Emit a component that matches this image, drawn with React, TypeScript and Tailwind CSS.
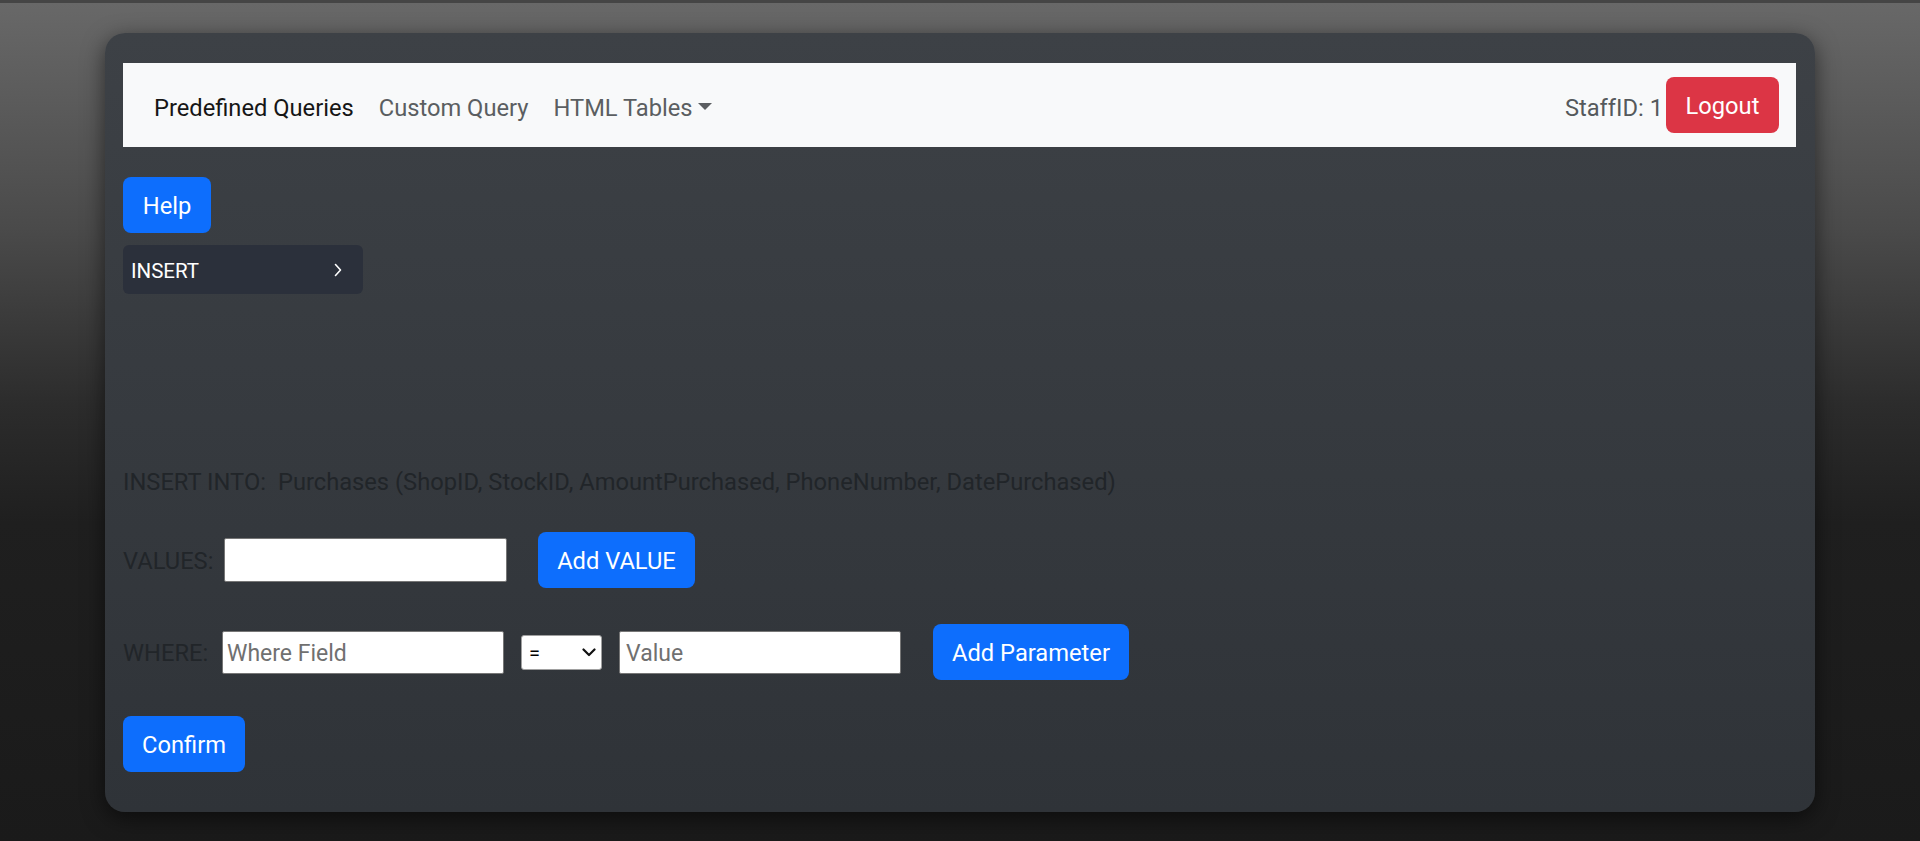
import React from "react";

function Chevron() {
  return (
    <svg width="8" height="14" viewBox="0 0 8 14" fill="none">
      <polyline points="1.5,1.5 6.5,7 1.5,12.5" stroke="#ffffff" strokeWidth="1.6" strokeLinecap="round" strokeLinejoin="round" />
    </svg>
  );
}

function SelectArrow() {
  return (
    <svg width="14" height="9" viewBox="0 0 14 9" fill="none">
      <polyline points="1.5,1.5 7,7 12.5,1.5" stroke="#111111" strokeWidth="2.2" strokeLinecap="round" strokeLinejoin="round" />
    </svg>
  );
}

export default function App() {
  return (
    <div className="min-h-screen w-full border-t-[3px] border-[#454545] bg-[linear-gradient(180deg,#686868_0%,#4a4a4a_27%,#2c2c2c_48%,#1f1f1f_62%,#1a1a1a_100%)] pt-[30px] pb-[29px] font-['Roboto','Liberation_Sans',sans-serif]">
      <div className="mx-auto w-[1710px] rounded-[20px] bg-linear-to-b from-[#3d4146] to-[#2f3338] pl-[18px] pr-[19px] pt-[30px] pb-[40px] shadow-[0_6px_22px_rgba(0,0,0,0.55)]">
        <nav className="flex h-[84px] items-center justify-between bg-[#f8f9fa] pl-[31px] pr-[17px]">
          <div className="flex items-center gap-[25px] pt-[5px] text-[23.7px] leading-[38px]">
            <span className="text-[#161616]">Predefined Queries</span>
            <span className="text-[#5b5e61]">Custom Query</span>
            <span className="flex items-center text-[#5b5e61]">
              HTML Tables
              <span className="ml-[5px] mb-[2px] h-0 w-0 border-x-[7px] border-t-[7px] border-x-transparent border-t-[#5b5e61]" />
            </span>
          </div>
          <div className="flex items-center gap-[3px]">
            <span className="pt-[5px] text-[23.7px] leading-[38px] text-[#55595c]">StaffID: 1</span>
            <button className="flex h-[56px] w-[113px] items-center justify-center rounded-[8px] bg-[#dc3545] pt-[4px] text-[23.7px] text-white">
              Logout
            </button>
          </div>
        </nav>

        <button className="mt-[30px] flex h-[56px] w-[88px] items-center justify-center rounded-[8px] bg-[#0d6efd] pt-[4px] text-[23.7px] text-white">
          Help
        </button>

        <div className="mt-[12px] flex h-[49px] w-[240px] items-center justify-between rounded-[6px] bg-[#2b303b] pl-[8px] pr-[21px]">
          <span className="pt-[3px] text-[20.5px] text-white">INSERT</span>
          <Chevron />
        </div>

        <div className="mt-[169px] flex h-[38px] items-center text-[23.7px] leading-[38px] text-[#212529]">
          <span>INSERT INTO:</span>
          <span className="ml-[12px]">Purchases (ShopID, StockID, AmountPurchased, PhoneNumber, DatePurchased)</span>
        </div>

        <div className="mt-[31px] flex h-[56px] items-center">
          <span className="w-[101px] pt-[4px] text-[23.7px] text-[#212529]">VALUES:</span>
          <input className="h-[44px] w-[283px] rounded-[2px] border border-[#767676] bg-white px-[4px] text-[23px] outline-none" />
          <button className="ml-[31px] flex h-[56px] w-[157px] items-center justify-center rounded-[8px] bg-[#0d6efd] pt-[4px] text-[23.7px] text-white">
            Add VALUE
          </button>
        </div>

        <div className="mt-[36px] flex h-[56px] items-center">
          <span className="w-[99px] pt-[4px] text-[23.7px] text-[#212529]">WHERE:</span>
          <input
            placeholder="Where Field"
            className="h-[43px] w-[282px] rounded-[2px] border border-[#767676] bg-white px-[4px] pt-[3px] text-[23px] text-black outline-none placeholder:text-[#707070]"
          />
          <div className="relative ml-[17px] h-[35px] w-[81px]">
            <select className="h-full w-full appearance-none rounded-[3px] border border-[#a0a0a0] bg-white pl-[7px] pt-[2px] text-[20px] text-black outline-none">
              <option>=</option>
            </select>
            <span className="pointer-events-none absolute right-[6px] top-[13px] flex">
              <SelectArrow />
            </span>
          </div>
          <input
            placeholder="Value"
            className="ml-[17px] h-[43px] w-[282px] rounded-[2px] border border-[#767676] bg-white px-[6px] pt-[3px] text-[23px] text-black outline-none placeholder:text-[#707070]"
          />
          <button className="ml-[32px] flex h-[56px] w-[196px] items-center justify-center rounded-[8px] bg-[#0d6efd] pt-[4px] text-[23.7px] text-white">
            Add Parameter
          </button>
        </div>

        <button className="mt-[36px] flex h-[56px] w-[122px] items-center justify-center rounded-[8px] bg-[#0d6efd] pt-[4px] text-[23.7px] text-white">
          Confirm
        </button>
      </div>
    </div>
  );
}
